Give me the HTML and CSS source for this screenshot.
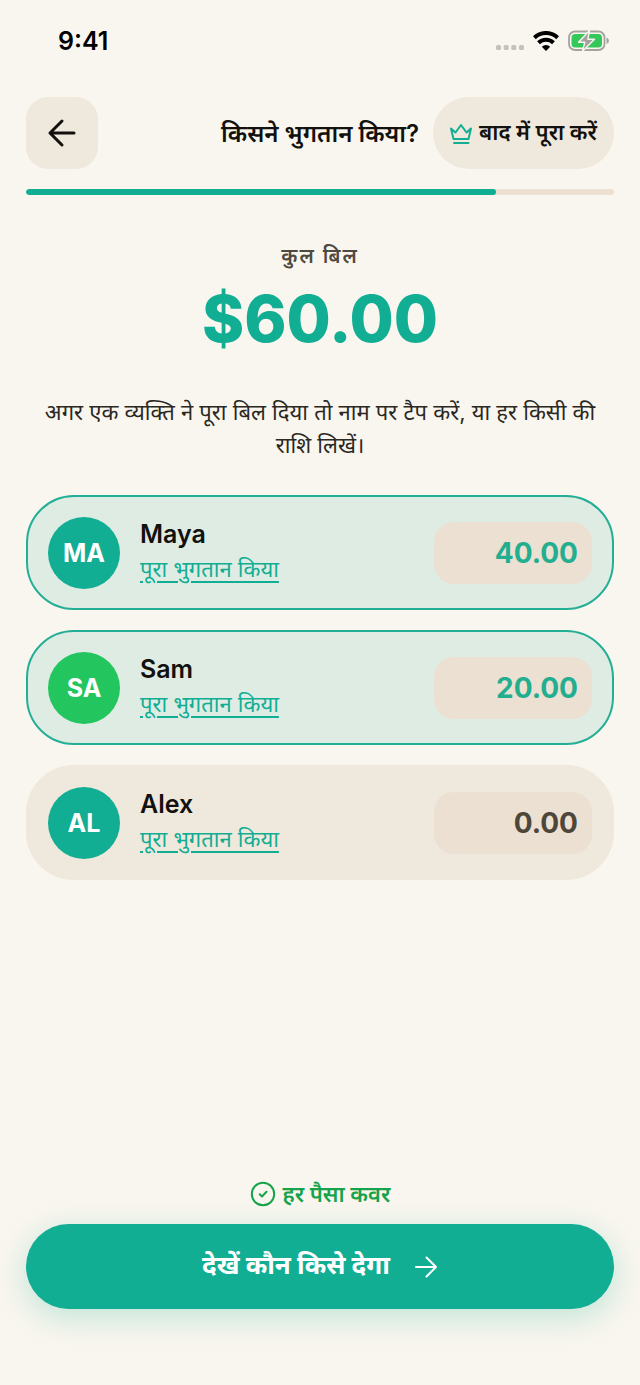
FILE: index.html
```html
<!DOCTYPE html>
<html lang="hi">
<head>
<meta charset="utf-8">
<meta name="viewport" content="width=device-width, initial-scale=1">
<title>किसने भुगतान किया?</title>
<link rel="stylesheet" href="styles.css">
</head>
<body>
<div class="screen">
  <div class="status">
    <span class="clock">9:41</span>
    <div class="status-icons">
      <svg class="signal" width="28" height="6" viewBox="0 0 28 6" aria-hidden="true"><rect width="5" height="5" rx="1.5"/><rect x="7.7" width="5" height="5" rx="1.5"/><rect x="15.3" width="5" height="5" rx="1.5"/><rect x="23" width="5" height="5" rx="1.5"/></svg>
      <svg width="26" height="20" viewBox="0 0 26 20" aria-hidden="true"><g fill="none" stroke="#000" stroke-width="4"><path d="M1.400 6.700a16.600 16.600 0 0 1 23.200 0"/><path d="M5.500 11.800a10.800 10.800 0 0 1 15 0"/></g><path d="M13 20l-4.200-4.200a6 6 0 0 1 8.400 0z"/></svg>
      <svg width="42" height="22" viewBox="0 0 42 22" aria-hidden="true"><rect x="1" y="1.500" width="35.500" height="18.500" rx="6" fill="none" stroke="#a5a39f" stroke-width="1.800"/><rect x="3.500" y="4" width="30.500" height="13.500" rx="3.800" fill="#34c759"/><path d="M38.500 7.500q2.500 1 2.500 3.300t-2.500 3.300z" fill="#a5a39f"/><path d="M21.500 0.500L10.500 12.200h6.300l-2.300 9L26.500 9.300h-6.700z" fill="#a5a39f" stroke="#f9f6ef" stroke-width="1.400" stroke-linejoin="round"/></svg>
    </div>
  </div>
  <header class="header">
    <button class="back" type="button" aria-label="वापस"><svg width="36" height="36" viewBox="0 0 24 24" aria-hidden="true"><path d="M20 12H4M12 4l-8 8 8 8"/></svg></button>
    <h1 class="title">किसने भुगतान किया?</h1>
    <button class="later" type="button"><svg width="24" height="24" viewBox="0 0 24 24" aria-hidden="true"><path d="M2 6.500l4.500 4L12 3l5.500 7.500 4.500-4L19.500 17h-15zM5 21h14.500"/></svg>बाद में पूरा करें</button>
  </header>
  <div class="progress" role="progressbar" aria-valuenow="80" aria-valuemin="0" aria-valuemax="100"><div class="progress-fill" style="width: 80%"></div></div>
  <main class="main">
    <p class="total-label">कुल बिल</p>
    <p class="total">$60.00</p>
    <p class="hint">अगर एक व्यक्ति ने पूरा बिल दिया तो नाम पर टैप करें, या हर किसी की राशि लिखें।</p>
    <ul class="people">
      <li class="person paid">
        <span class="avatar">MA</span>
        <div class="info"><label class="name" for="maya">Maya</label><button class="full" type="button">पूरा भुगतान किया</button></div>
        <input class="amount" id="maya" type="text" inputmode="decimal" value="40.00">
      </li>
      <li class="person paid">
        <span class="avatar green">SA</span>
        <div class="info"><label class="name" for="sam">Sam</label><button class="full" type="button">पूरा भुगतान किया</button></div>
        <input class="amount" id="sam" type="text" inputmode="decimal" value="20.00">
      </li>
      <li class="person">
        <span class="avatar">AL</span>
        <div class="info"><label class="name" for="alex">Alex</label><button class="full" type="button">पूरा भुगतान किया</button></div>
        <input class="amount" id="alex" type="text" inputmode="decimal" value="0.00">
      </li>
    </ul>
  </main>
  <footer class="footer">
    <p class="covered"><svg width="26" height="26" viewBox="0 0 26 26" aria-hidden="true"><circle cx="13" cy="13" r="11.200"/><path d="M9.700 13.200l2.300 2.300 4.500-4.700"/></svg>हर पैसा कवर</p>
    <button class="cta" type="button">देखें कौन किसे देगा<svg width="24" height="24" viewBox="0 0 24 24" aria-hidden="true"><path d="M2 12h20M12.500 2.500L22 12l-9.500 9.500"/></svg></button>
  </footer>
</div>
</body>
</html>
```
FILE: styles.css
```css
* { box-sizing: border-box; margin: 0; padding: 0; }

body {
  background: #f9f6ef;
  color: #12110e;
  font-family: Inter, "Noto Sans Devanagari", "Noto Sans", sans-serif;
}

button, input { font: inherit; color: inherit; border: 0; background: none; }
button { cursor: pointer; }

.screen {
  min-height: 100vh;
  display: flex;
  flex-direction: column;
  padding: 0 26px 76px;
}

.status {
  height: 97px;
  display: flex;
  justify-content: space-between;
  align-items: flex-start;
  padding: 24px 4px 0 32px;
}
.clock { font-size: 25px; line-height: 34px; font-weight: 600; color: #000; }
.status-icons { display: flex; align-items: center; gap: 9px; height: 34px; }
.signal { fill: #c5c2bc; margin-top: 14px; }

.header { display: flex; align-items: center; gap: 14px; }
.back {
  width: 72px;
  height: 72px;
  border-radius: 22px;
  background: #efe8dc;
  display: grid;
  place-items: center;
}
.back svg, .later svg, .covered svg, .cta svg {
  fill: none;
  stroke: currentColor;
  stroke-width: 2;
  stroke-linecap: round;
  stroke-linejoin: round;
}
.title { flex: 1; padding-top: 2px; text-align: right; font-size: 24px; line-height: 36px; font-weight: 600; white-space: nowrap; }
.later {
  height: 72px;
  padding: 2px 17px 0 16px;
  border-radius: 36px;
  background: #efe8dc;
  display: flex;
  align-items: center;
  gap: 6px;
  font-size: 22px;
  font-weight: 600;
  white-space: nowrap;
}
.later svg { stroke: #12ae94; }

.progress { height: 6px; margin-top: 20px; border-radius: 3px; background: #ebe0d2; overflow: hidden; }
.progress-fill { height: 100%; border-radius: 3px; background: #12ae94; }

.main { flex: 1; }
.total-label {
  margin-top: 46px;
  text-align: center;
  font-size: 20px;
  line-height: 30px;
  font-weight: 600;
  letter-spacing: 2px;
  color: #4f493f;
}
.total { text-align: center; font-size: 64px; line-height: 80px; font-weight: 800; margin-top: 8px; color: #12ae94; }
.hint { margin-top: 37px; text-align: center; font-size: 22px; line-height: 33px; color: #2b2823; }

.people { list-style: none; margin-top: 33px; display: flex; flex-direction: column; gap: 20px; }
.person {
  min-height: 115px;
  padding: 0 20px;
  border: 2px solid #efe8dc;
  border-radius: 48px;
  background: #efe8dc;
  display: flex;
  align-items: center;
  gap: 20px;
}
.person.paid { border-color: #23ae96; background: #deece4; }
.avatar {
  flex: none;
  width: 72px;
  height: 72px;
  border-radius: 50%;
  background: #12ae94;
  color: #fff;
  font-size: 25px;
  font-weight: 700;
  display: grid;
  place-items: center;
}
.avatar.green { background: #22c55e; }
.info { flex: 1; min-width: 0; padding-bottom: 4px; display: flex; flex-direction: column; align-items: flex-start; gap: 4px; }
.name { font-size: 25px; line-height: 32px; font-weight: 600; }
.full {
  font-size: 22px;
  line-height: 30px;
  color: #12ae94;
  text-decoration: underline;
  text-decoration-thickness: 2px;
  text-underline-offset: 4px;
  white-space: nowrap;
}
.amount {
  width: 158px;
  height: 62px;
  padding: 0 14px;
  border-radius: 20px;
  background: #ebe0d2;
  text-align: right;
  font-size: 28px;
  font-weight: 700;
  color: #4f463a;
}
.paid .amount { color: #23ae8f; }

.covered {
  display: flex;
  justify-content: center;
  align-items: center;
  gap: 7px;
  font-size: 22px;
  line-height: 30px;
  font-weight: 600;
  color: #16a34a;
}
.cta {
  width: 100%;
  height: 85px;
  margin-top: 15px;
  border-radius: 43px;
  background: #12ae94;
  box-shadow: 0 8px 32px rgba(18, 174, 148, 0.25);
  color: #fff;
  font-size: 26px;
  font-weight: 700;
  display: flex;
  justify-content: center;
  align-items: center;
  gap: 24px;
}
```
